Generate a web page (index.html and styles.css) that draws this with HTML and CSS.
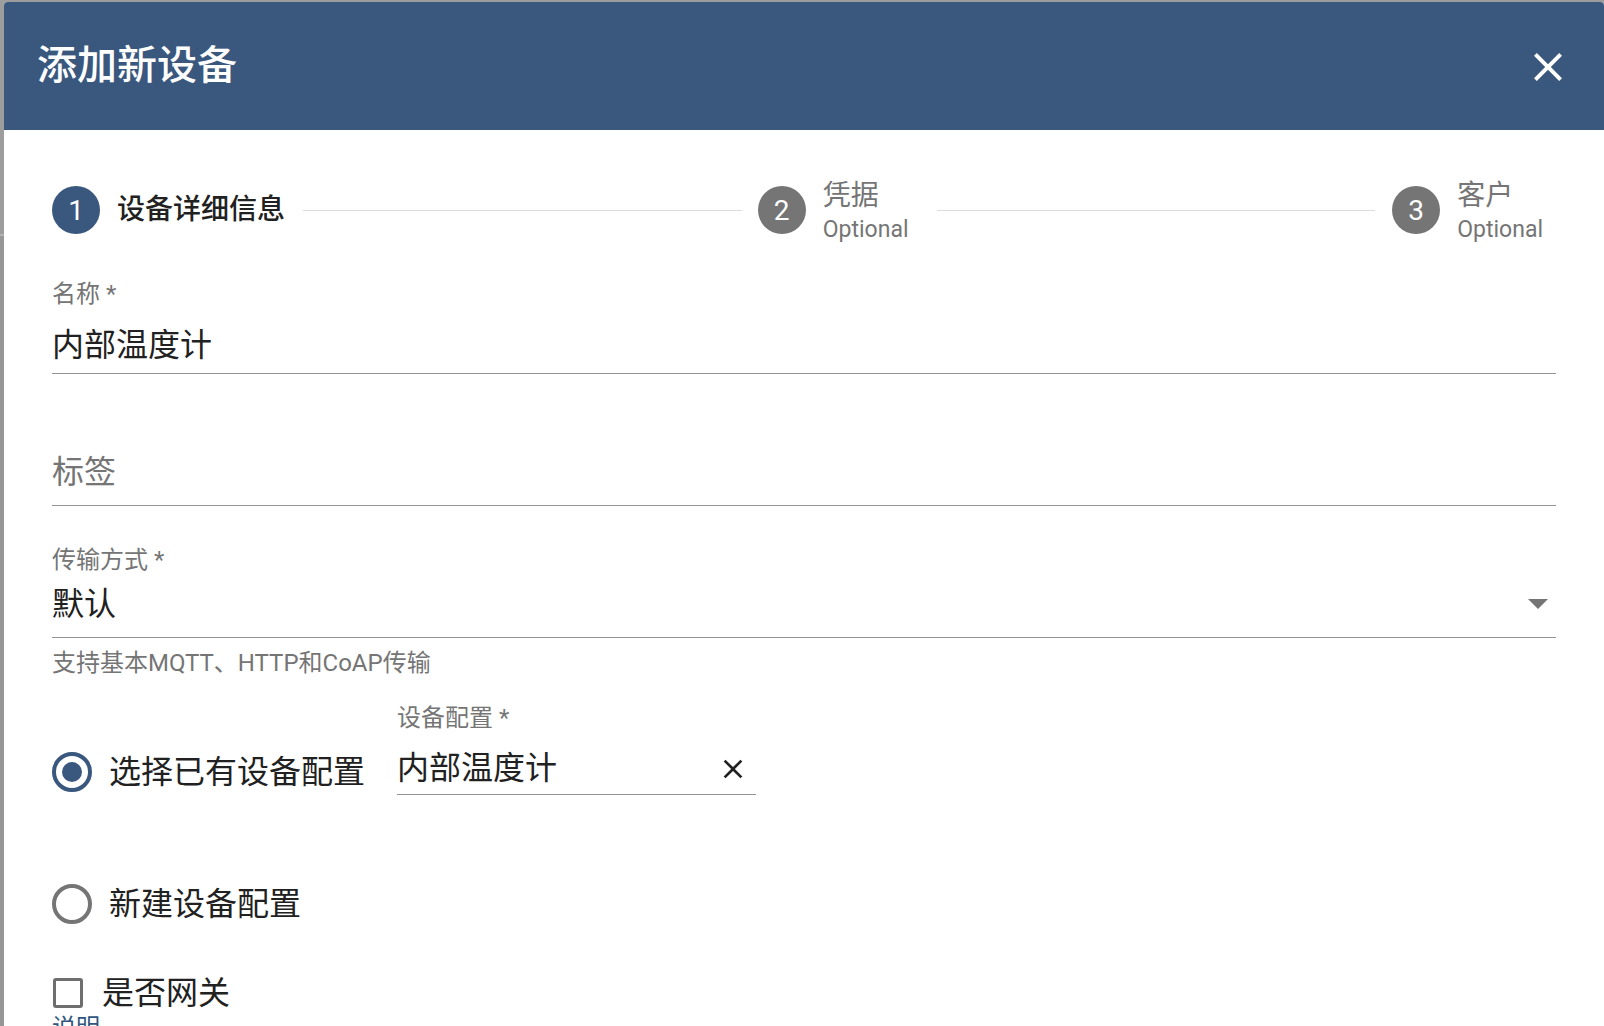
FILE: index.html
```html
<!DOCTYPE html>
<html lang="zh-Hans">
<head>
    <meta charset="UTF-8">
    <meta name="viewport" content="width=device-width, initial-scale=1.0">
    <title>添加新设备</title>
    <link rel="stylesheet" href="styles.css">
</head>
<body>
<div class="dialog">
    <!-- 标题栏 -->
    <header class="dialog-header">
        <h2 class="dialog-title">添加新设备</h2>
        <button class="close-btn" type="button">
            <svg width="48" height="48" viewBox="0 0 24 24"><path fill="#fff" d="M19 6.41L17.59 5 12 10.59 6.41 5 5 6.41 10.59 12 5 17.59 6.41 19 12 13.41 17.59 19 19 17.59 13.41 12z"/></svg>
        </button>
    </header>

    <div class="dialog-content">
        <!-- 步骤 -->
        <div class="stepper">
            <div class="step active">
                <span class="step-icon">1</span>
                <div class="step-label">设备详细信息</div>
            </div>
            <div class="step-line"></div>
            <div class="step">
                <span class="step-icon">2</span>
                <div class="step-label two-line">
                    <div>凭据</div>
                    <div class="step-optional">Optional</div>
                </div>
            </div>
            <div class="step-line second"></div>
            <div class="step last">
                <span class="step-icon">3</span>
                <div class="step-label two-line">
                    <div>客户</div>
                    <div class="step-optional">Optional</div>
                </div>
            </div>
        </div>

        <!-- 表单 -->
        <form class="device-form">
            <div class="field field-name">
                <label class="field-label">名称 *</label>
                <div class="field-input">内部温度计</div>
            </div>

            <div class="field field-tags">
                <div class="field-input placeholder">标签</div>
            </div>

            <div class="field field-transport">
                <label class="field-label">传输方式 *</label>
                <div class="field-input select">
                    <span>默认</span>
                    <span class="select-arrow"></span>
                </div>
                <div class="field-hint">支持基本MQTT、HTTP和CoAP传输</div>
            </div>

            <div class="profile-row">
                <div class="radio-option checked first">
                    <span class="radio"></span>
                    <span class="radio-label">选择已有设备配置</span>
                </div>
                <div class="field field-profile">
                    <label class="field-label">设备配置 *</label>
                    <div class="field-input">
                        <span>内部温度计</span>
                        <svg class="clear-icon" width="32" height="32" viewBox="0 0 24 24"><path fill="#212121" d="M19 6.41L17.59 5 12 10.59 6.41 5 5 6.41 10.59 12 5 17.59 6.41 19 12 13.41 17.59 19 19 17.59 13.41 12z"/></svg>
                    </div>
                </div>
            </div>

            <div class="radio-option second">
                <span class="radio"></span>
                <span class="radio-label">新建设备配置</span>
            </div>

            <div class="checkbox-option">
                <span class="checkbox"></span>
                <span class="checkbox-label">是否网关</span>
            </div>
            <a class="desc-link">说明</a>
        </form>
    </div>
</div>
</body>
</html>
```

FILE: styles.css
```css
* { margin: 0; padding: 0; box-sizing: border-box; }
html, body { height: 100%; overflow: hidden; }
button { outline: none; border: none; background: none; }

body {
    padding: 2px 0 0 4px;
    background: linear-gradient(#9d9d9d 0, #9d9d9d 234px, #b4b4b4 234px, #b4b4b4 236px, #969696 236px);
    font-family: Roboto, "Noto Sans CJK SC", sans-serif;
    color: #212121;
}

.dialog {
    width: 1600px;
    min-height: 1100px;
    background: #fff;
    border-radius: 4px 4px 0 0;
}

/* 标题栏 */
.dialog-header {
    height: 128px;
    display: flex;
    align-items: center;
    justify-content: space-between;
    padding: 0 32px 0 33px;
    background: #3a577e;
    color: #fff;
    border-radius: 4px 4px 0 0;
}
.dialog-title {
    font-size: 40px;
    font-weight: 500;
    line-height: 48px;
}
.close-btn {
    width: 48px;
    height: 48px;
    display: flex;
    margin-top: 2px;
}

.dialog-content {
    padding: 56px 48px 0;
}

/* 步骤 */
.stepper {
    height: 48px;
    display: flex;
    align-items: center;
}
.step {
    display: flex;
    align-items: center;
}
.step.last {
    margin-right: 13px;
}
.step-icon {
    width: 48px;
    height: 48px;
    flex-shrink: 0;
    border-radius: 50%;
    background: #757575;
    color: #fff;
    font-size: 28px;
    display: flex;
    align-items: center;
    justify-content: center;
}
.step.active .step-icon {
    background: #3a577e;
}
.step-label {
    margin-left: 17px;
    font-size: 28px;
    line-height: 34px;
    color: #757575;
    white-space: nowrap;
}
.step.active .step-label {
    color: #212121;
    font-weight: 500;
}
.step-label.two-line {
    padding-top: 6px;
}
.step-optional {
    font-size: 23px;
}
.step-line {
    flex: 1;
    height: 1px;
    background: #dcdcdc;
    margin: 0 16px 0 18px;
}
.step-line.second {
    margin-left: 28px;
    margin-right: 17px;
}

/* 表单 */
.device-form {
    padding-top: 46px;
}
.field-label {
    display: block;
    font-size: 24px;
    line-height: 28px;
    color: #757575;
}
.field-input {
    display: flex;
    align-items: center;
    justify-content: space-between;
    font-size: 32px;
    line-height: 40px;
    padding-bottom: 8px;
    border-bottom: 1px solid #949494;
}
.field-name .field-label {
    margin-bottom: 17px;
}
.field-tags {
    margin-top: 78px;
}
.field-input.placeholder {
    color: #757575;
    padding-bottom: 13px;
}
.field-transport {
    margin-top: 40px;
}
.field-transport .field-label {
    margin-bottom: 10px;
}
.field-input.select {
    padding-bottom: 13px;
}
.select-arrow {
    width: 0;
    height: 0;
    margin-right: 8px;
    border-left: 10px solid transparent;
    border-right: 10px solid transparent;
    border-top: 10px solid #757575;
}
.field-hint {
    margin-top: 11px;
    font-size: 24px;
    line-height: 28px;
    color: #757575;
}

.profile-row {
    display: flex;
    align-items: flex-start;
    margin-top: 27px;
}
.field-profile {
    width: 359px;
}
.field-profile .field-label {
    margin-bottom: 16px;
}
.field-profile .field-input {
    padding-bottom: 6px;
}
.clear-icon {
    margin: 2px 7px 0 0;
}

/* 单选 */
.radio-option {
    display: flex;
    align-items: center;
    height: 40px;
}
.radio-option.first {
    width: 345px;
    margin-top: 48px;
}
.radio-option.second {
    margin-top: 89px;
}
.radio {
    width: 40px;
    height: 40px;
    flex-shrink: 0;
    border: 4px solid #757575;
    border-radius: 50%;
    display: flex;
    align-items: center;
    justify-content: center;
}
.radio-option.checked .radio {
    border-color: #3a577e;
}
.radio-option.checked .radio:after {
    content: "";
    width: 20px;
    height: 20px;
    border-radius: 50%;
    background: #3a577e;
}
.radio-label {
    margin-left: 17px;
    font-size: 32px;
    line-height: 40px;
    white-space: nowrap;
}

/* 复选 */
.checkbox-option {
    display: flex;
    align-items: center;
    height: 30px;
    margin-top: 54px;
}
.checkbox {
    width: 30px;
    height: 30px;
    margin-left: 1px;
    border: 3px solid #6e6e6e;
    border-radius: 3px;
}
.checkbox-label {
    margin-left: 19px;
    font-size: 32px;
    line-height: 40px;
}
.desc-link {
    display: block;
    margin-top: 6px;
    font-size: 24px;
    line-height: 28px;
    color: #305680;
}
```
